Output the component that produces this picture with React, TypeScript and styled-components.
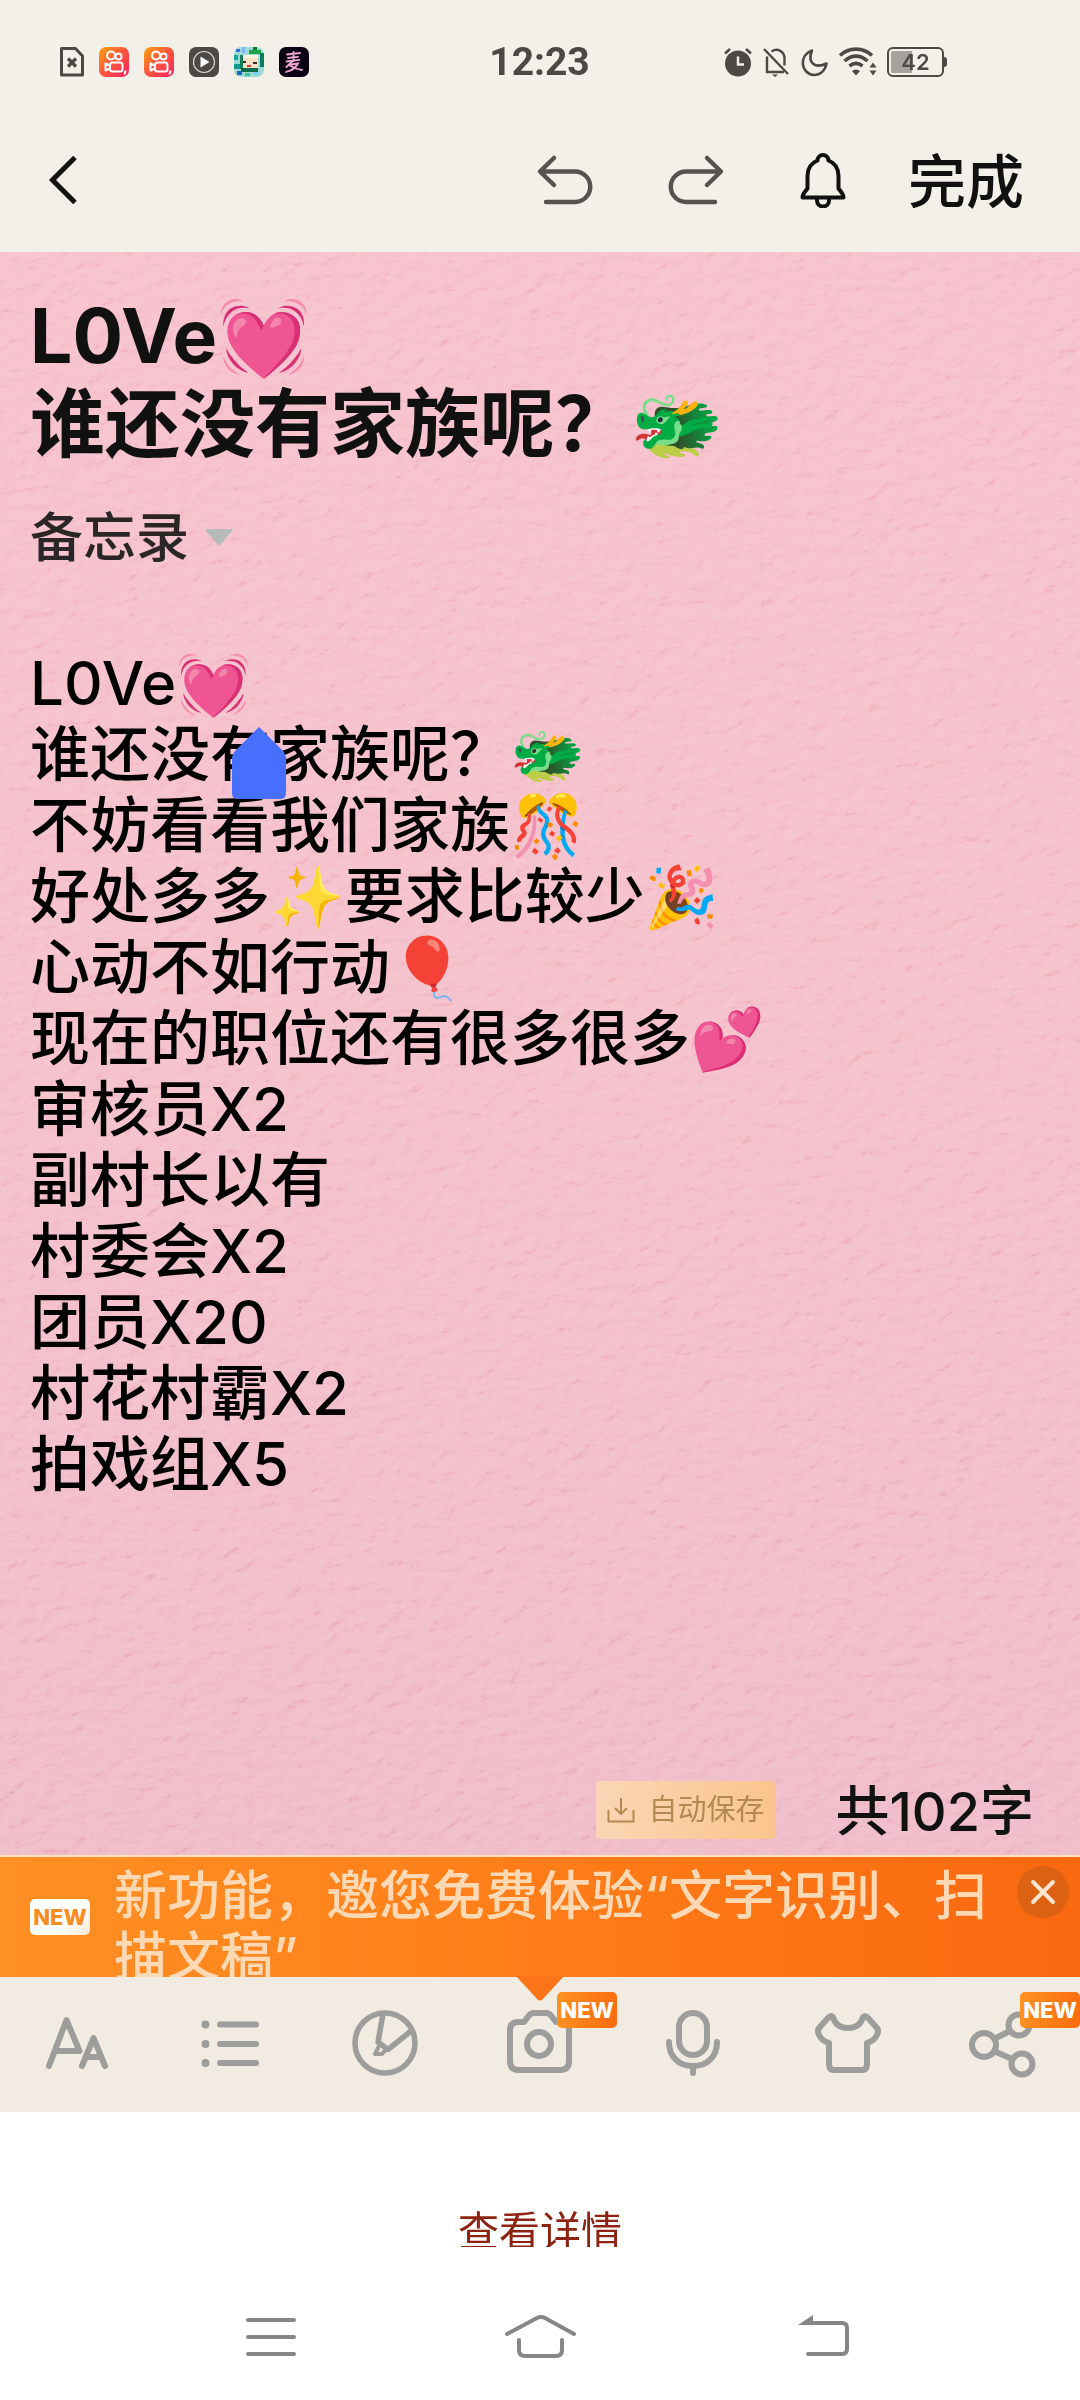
import React from 'react';
import styled, { createGlobalStyle } from 'styled-components';

const GlobalStyle = createGlobalStyle`
  *, *::before, *::after { box-sizing: border-box; }
  body {
    margin: 0;
    background: #ffffff;
    font-family: Inter, "Noto Sans CJK SC", "Noto Color Emoji", sans-serif;
  }
  button, textarea, select { font-family: inherit; color: inherit; }
  svg { display: block; }
`;

const Screen = styled.div`
  min-height: 100vh;
  display: flex;
  flex-direction: column;
`;

/* ---------- top of the screen ---------- */

const Header = styled.header`
  background: #f3f0e9;
`;

const StatusBar = styled.div`
  height: 124px;
  padding: 0 136px 0 57px;
  display: grid;
  grid-template-columns: 1fr auto 1fr;
  align-items: center;
  color: #4c4846;
`;

const StatusGroup = styled.div<{ $gap: number; $end?: boolean }>`
  display: flex;
  align-items: center;
  justify-content: ${(p) => (p.$end ? 'flex-end' : 'flex-start')};
  gap: ${(p) => p.$gap}px;
`;

const Clock = styled.time`
  font-family: Roboto, sans-serif;
  font-size: 39px;
  line-height: 48px;
  font-weight: 700;
  padding-left: 78px;
`;

const Battery = styled.span`
  position: relative;
  width: 57px;
  height: 30px;
  border: 2px solid #4c4846;
  border-radius: 6px;
  padding: 2px;
  background: linear-gradient(90deg, #a5a29e 42%, transparent 42%) content-box;
  font-size: 22px;
  line-height: 22px;
  font-weight: 600;
  text-align: center;
  &::after {
    content: '';
    position: absolute;
    right: -5px;
    top: 8px;
    width: 3px;
    height: 10px;
    border-radius: 0 3px 3px 0;
    background: #4c4846;
  }
`;

const ActionBar = styled.nav`
  height: 128px;
  padding: 0 56px 16px 42px;
  display: flex;
  align-items: center;
`;

const PlainButton = styled.button`
  padding: 0;
  border: 0;
  background: none;
  display: flex;
  align-items: center;
  justify-content: center;
  cursor: pointer;
`;

const ActionGroup = styled.div`
  margin-left: auto;
  display: flex;
  align-items: center;
  gap: 71px;
`;

const DoneButton = styled(PlainButton)`
  font-size: 58px;
  line-height: 64px;
  font-weight: 500;
  color: #111111;
  margin-left: -12px;
  padding-top: 4px;
`;

/* ---------- note ---------- */

const Paper = styled.main`
  position: relative;
  flex: 1;
  display: flex;
  flex-direction: column;
  padding: 40px 30px 16px;
  background: linear-gradient(180deg, #f6c0cc 0%, #f4bfca 50%, #efbac8 100%);
`;

const Grain = styled.svg`
  position: absolute;
  inset: 0;
  width: 100%;
  height: 100%;
  opacity: 0.3;
  mix-blend-mode: soft-light;
  pointer-events: none;
`;

const NoteField = styled.textarea`
  position: relative;
  display: block;
  width: 100%;
  padding: 0;
  border: 0;
  outline: 0;
  resize: none;
  overflow: hidden;
  background: none;
`;

const TitleField = styled(NoteField)`
  height: 176px;
  font-size: 75px;
  line-height: 88px;
  font-weight: 700;
  color: #111111;
`;

const BodyField = styled(NoteField)`
  height: 852px;
  font-size: 60px;
  line-height: 71px;
  font-weight: 500;
  color: #000000;
`;

const FolderPicker = styled.label`
  position: relative;
  align-self: flex-start;
  margin: 40px 0 80px;
  display: flex;
  align-items: center;
  gap: 16px;
`;

const FolderSelect = styled.select`
  appearance: none;
  height: 60px;
  padding: 0;
  border: 0;
  background: none;
  font-size: 53px;
  line-height: 60px;
  font-weight: 500;
  color: #2a2526;
`;

const BodyWrap = styled.div`
  position: relative;
`;

const CursorHandle = styled.svg`
  position: absolute;
  left: 202px;
  top: 79px;
`;

const NoteFooter = styled.div`
  position: relative;
  margin-top: auto;
  padding-right: 16px;
  display: flex;
  justify-content: flex-end;
  align-items: center;
  gap: 60px;
`;

const AutoSave = styled.button`
  height: 58px;
  padding: 0 11px;
  border: 0;
  border-radius: 4px;
  display: flex;
  align-items: center;
  gap: 13px;
  background: linear-gradient(90deg, #fad6b6, #fbc48c);
  && { color: #b18a52; }
  font-size: 29px;
  line-height: 32px;
`;

const WordCount = styled.span`
  padding-top: 4px;
  font-size: 54px;
  line-height: 54px;
  font-weight: 500;
  color: #111111;
`;

/* ---------- promo banner ---------- */

const Banner = styled.aside`
  position: relative;
  z-index: 1;
  height: 122px;
  border-top: 2px solid #fde3c4;
  padding-left: 30px;
  display: flex;
  align-items: flex-start;
  background: linear-gradient(90deg, #ff9024, #ff7d18 50%, #f96810);
`;

const BannerText = styled.p`
  margin: 0;
  padding: 9px 0 0 24px;
  flex: 1;
  height: 120px;
  overflow: hidden;
  font-size: 53px;
  line-height: 61px;
  font-weight: 500;
  color: #ffd8b4;
`;

const NewTag = styled.span<{ $light?: boolean }>`
  flex: none;
  width: 60px;
  height: 36px;
  border-radius: 5px;
  display: flex;
  align-items: center;
  justify-content: center;
  font-size: 22px;
  line-height: 36px;
  font-weight: 800;
  color: ${(p) => (p.$light ? '#f98d22' : '#ffffff')};
  background: ${(p) =>
    p.$light ? 'linear-gradient(135deg, #ffffff 60%, #ffe9d2)' : 'linear-gradient(100deg, #ff9322, #fa6a10)'};
`;

const BannerTag = styled(NewTag)`
  margin-top: 42px;
`;

const CloseButton = styled(PlainButton)`
  flex: none;
  width: 52px;
  height: 52px;
  margin: 9px 11px 0 18px;
  border-radius: 50%;
  background: #dd6113;
`;

const Pointer = styled.svg`
  position: absolute;
  top: 119px;
  left: 50%;
  margin-left: -24px;
`;

/* ---------- tool row ---------- */

const ToolRow = styled.div`
  height: 135px;
  display: grid;
  grid-template-columns: repeat(7, 1fr);
  background: #f1ebe1;
  color: #9d9d9c;
`;

const ToolButton = styled(PlainButton)`
  position: relative;
  height: 132px;
`;

const CornerTag = styled(NewTag)`
  position: absolute;
  right: 0;
  top: 15px;
`;

/* ---------- bottom ---------- */

const Footer = styled.footer`
  height: 288px;
  background: #ffffff;
  display: flex;
  flex-direction: column;
  align-items: center;
  color: #868686;
`;

const DetailsLink = styled.a`
  margin-top: 96px;
  height: 39px;
  overflow: hidden;
  font-size: 41px;
  line-height: 46px;
  color: #8d2413;
  text-decoration: none;
`;

const SystemNav = styled.nav`
  width: 75%;
  margin-top: 65px;
  display: grid;
  grid-template-columns: repeat(3, 1fr);
`;

const Kuaishou = ({ id }: { id: string }) => (
  <svg width="30" height="30" viewBox="0 0 30 30" fill="none">
    <defs>
      <linearGradient id={id} x1="0" y1="0" x2="1" y2="1">
        <stop offset="0" stopColor="#ffa30a" />
        <stop offset="0.45" stopColor="#ff5a3c" />
        <stop offset="1" stopColor="#f5205f" />
      </linearGradient>
    </defs>
    <rect width="30" height="30" rx="7" fill={`url(#${id})`} />
    <g stroke="#fff" strokeWidth="2">
      <circle cx="12" cy="8.500" r="4" />
      <circle cx="19.500" cy="9.500" r="3" />
      <rect x="11" y="15.500" width="12.500" height="9" rx="2.500" />
      <path d="M11 18.500L6.500 16.500V23.500L11 21.500" strokeLinejoin="round" />
    </g>
    <path d="M25.500 23.500h2l-1 4h-2z" fill="#fff" />
  </svg>
);

const noteBody = [
  'L0Ve💓',
  '谁还没有家族呢？🐲',
  '不妨看看我们家族🎊',
  '好处多多✨要求比较少🎉',
  '心动不如行动🎈',
  '现在的职位还有很多很多💕',
  '审核员X2',
  '副村长以有',
  '村委会X2',
  '团员X20',
  '村花村霸X2',
  '拍戏组X5',
].join('\n');

const pixels: [number, number, number, number, string][] = [
  [2, 2, 4, 3, '#2e6fd8'], [8, 0, 3, 6, '#7fb4ee'], [0, 8, 4, 5, '#17a8a0'], [0, 17, 6, 5, '#0c9a8e'],
  [3, 24, 5, 4, '#1f64c4'], [11, 26, 5, 3, '#35c79a'], [20, 25, 5, 3, '#7fd0f0'], [19, 0, 4, 3, '#0d7a2e'],
  [15, 3, 12, 4, '#1fa04a'], [26, 6, 4, 14, '#0b7d5c'], [6, 8, 3, 14, '#12805a'], [7, 21, 17, 4, '#0a6b4c'],
  [9, 8, 15, 13, '#fbe0c8'], [9, 8, 15, 3, '#fff4e2'], [9, 14, 3, 2, '#3a2c22'], [19, 15, 4, 2, '#3a2c22'],
  [13, 18, 4, 2, '#d6402e'],
];

export default function App() {
  return (
    <Screen>
      <GlobalStyle />
      <Header>
        <StatusBar>
          <StatusGroup $gap={15}>
            <svg width="27" height="30" viewBox="0 0 27 30" fill="none" stroke="#4c4846">
              <path d="M5 1.500h13.500l7 7.500v19H4.500V1.500z" strokeWidth="3" strokeLinejoin="round" />
              <path d="M11 11.500l8 8M19 11.500l-8 8" strokeWidth="3.200" />
            </svg>
            <Kuaishou id="ks-a" />
            <Kuaishou id="ks-b" />
            <svg width="30" height="30" viewBox="0 0 30 30">
              <rect width="30" height="30" rx="7" fill="#4c4846" />
              <circle cx="15" cy="15" r="10.500" fill="none" stroke="#d8d6d2" strokeWidth="1.200" />
              <path d="M11.500 9.500v11l9-5.500z" fill="#fff" />
            </svg>
            <svg width="30" height="30" viewBox="0 0 30 30">
              <clipPath id="cube"><rect width="30" height="30" rx="7" /></clipPath>
              <g clipPath="url(#cube)">
                <rect width="30" height="30" fill="#9fd9d6" />
                {pixels.map(([x, y, w, h, c], i) => (
                  <rect key={i} x={x} y={y} width={w} height={h} fill={c} />
                ))}
              </g>
            </svg>
            <svg width="30" height="30" viewBox="0 0 30 30" fill="none">
              <rect width="30" height="30" rx="7" fill="#0b0313" />
              <g stroke="#efa6cf" strokeWidth="1.800" strokeLinecap="round">
                <path d="M8 7.500l13-1.500M9 11l10-1.200M7.500 14.500l13-1.700M14.500 5v9" />
                <path d="M13.500 14l-6 6M12 17.500l7-1c-2 4-6 7-12 8.500M11 18.500c3 2 6 4 12 4.500" />
              </g>
            </svg>
          </StatusGroup>
          <Clock>12:23</Clock>
          <StatusGroup $gap={9} $end>
            <svg width="30" height="30" viewBox="0 0 30 30">
              <circle cx="15" cy="16.500" r="13" fill="#4c4846" />
              <path d="M2 6.500l5-4.500M28 6.500L23 2" stroke="#4c4846" strokeWidth="2.600" fill="none" />
              <path d="M15 9.500v8h6" stroke="#f3f0e9" strokeWidth="2.400" fill="none" />
            </svg>
            <svg width="28" height="30" viewBox="0 0 28 30" fill="none" stroke="#4c4846" strokeWidth="2.400">
              <path d="M2 2l24 25M5 9.500v15.500h17M9.500 4.500c6-4 13 0 13 7v7" />
              <path d="M10 27.500h6l-3 2.500z" fill="#4c4846" stroke="none" />
            </svg>
            <svg width="30" height="30" viewBox="0 0 30 30" fill="none" stroke="#4c4846" strokeWidth="2.600">
              <path d="M13 3.500C8 16 16 22 27.500 16.500C26 24 21 28 15 28C2 27 -1 9 13 3.500z" strokeLinejoin="round" />
            </svg>
            <svg width="40" height="30" viewBox="0 0 40 30" fill="none" stroke="#4c4846" strokeWidth="3.600">
              <path d="M2 8.500C11 0 25 0 34 8.500M6.500 14C14 7.500 22 7.500 29.500 14M11.500 19C16 15.500 20 15.500 24.500 19" />
              <path d="M14 24q4-3 8 0l-4 4.500z" fill="#4c4846" stroke="none" />
              <path d="M31.500 20.500l3.500-5 3.500 5zM31.500 23.500l3.500 5 3.500-5z" fill="#4c4846" stroke="none" />
            </svg>
            <Battery>42</Battery>
          </StatusGroup>
        </StatusBar>
        <ActionBar>
          <PlainButton aria-label="返回">
            <svg width="44" height="52" viewBox="0 0 44 52" fill="none" stroke="#111" strokeWidth="5">
              <path d="M33 3.500L10.500 26L33 48.500" />
            </svg>
          </PlainButton>
          <ActionGroup>
            <PlainButton aria-label="撤销">
              <svg width="60" height="52" viewBox="0 0 60 52" fill="none" stroke="#555250" strokeWidth="4.500" strokeLinecap="round" strokeLinejoin="round">
                <path d="M19 4L5 17.500L19 31M6 17.500H40a15 15 0 0 1 0 30.500H11" />
              </svg>
            </PlainButton>
            <PlainButton aria-label="重做">
              <svg width="60" height="52" viewBox="0 0 60 52" fill="none" stroke="#555250" strokeWidth="4.500" strokeLinecap="round" strokeLinejoin="round">
                <path d="M41 4L55 17.500L41 31M54 17.500H20a15 15 0 0 0 0 30.500H49" />
              </svg>
            </PlainButton>
            <PlainButton aria-label="提醒">
              <svg width="52" height="56" viewBox="0 0 52 56" fill="none" stroke="#111" strokeWidth="4" strokeLinejoin="round">
                <path d="M20.500 8.500a5.500 5.500 0 0 1 11 0C38 11 41.500 16.500 41.500 24V36.500C44 40 46.500 42 46.500 45.500H5.500C5.500 42 8 40 10.500 36.500V24C10.500 16.500 14 11 20.500 8.500z" />
                <path d="M20 46v2.500a6 6 0 0 0 12 0V46" />
              </svg>
            </PlainButton>
            <DoneButton>完成</DoneButton>
          </ActionGroup>
        </ActionBar>
      </Header>

      <Paper>
        <Grain aria-hidden="true">
          <filter id="grain" x="0" y="0" width="100%" height="100%">
            <feTurbulence type="fractalNoise" baseFrequency="0.06 0.08" numOctaves="4" seed="8" />
            <feColorMatrix values="0 0 0 0 0  0 0 0 0 0  0 0 0 0 0  1 0 0 0 0" />
            <feDiffuseLighting lightingColor="#ffffff" surfaceScale="5" diffuseConstant="0.75">
              <feDistantLight azimuth="235" elevation="42" />
            </feDiffuseLighting>
          </filter>
          <rect width="100%" height="100%" filter="url(#grain)" />
        </Grain>
        <TitleField aria-label="标题" spellCheck={false} defaultValue={'L0Ve💓\n谁还没有家族呢？🐲'} />
        <FolderPicker>
          <FolderSelect aria-label="文件夹" defaultValue="备忘录">
            <option>备忘录</option>
          </FolderSelect>
          <svg width="28" height="18" viewBox="0 0 28 18">
            <path d="M1 0h26q1 1 0 2L15.500 15.500q-1.500 1.500-3 0L1 2q-1-1 0-2z" fill="#b6babb" />
          </svg>
        </FolderPicker>
        <BodyWrap>
          <BodyField aria-label="正文" spellCheck={false} defaultValue={noteBody} />
          <CursorHandle width="54" height="72" viewBox="0 0 54 72" aria-hidden="true">
            <path d="M27 0L50 23q4 4 4 9V66q0 6-6 6H6q-6 0-6-6V32q0-5 4-9z" fill="#466ffd" />
          </CursorHandle>
        </BodyWrap>
        <NoteFooter>
          <AutoSave>
            <svg width="28" height="28" viewBox="0 0 28 28" fill="none" stroke="#b18a52" strokeWidth="2">
              <path d="M1.500 14v11.500h25V14M14 2v15.500M8 12l6 6 6-6" />
            </svg>
            自动保存
          </AutoSave>
          <WordCount>共102字</WordCount>
        </NoteFooter>
      </Paper>

      <Banner>
        <BannerTag $light>NEW</BannerTag>
        <BannerText>新功能，邀您免费体验“文字识别、扫描文稿”</BannerText>
        <CloseButton aria-label="关闭">
          <svg width="28" height="28" viewBox="0 0 28 28" fill="none" stroke="#ffe3cc" strokeWidth="4" strokeLinecap="round">
            <path d="M4 4l20 20M24 4L4 24" />
          </svg>
        </CloseButton>
        <Pointer width="48" height="26" viewBox="0 0 48 26" aria-hidden="true">
          <path d="M0 0h48L26.500 23.500q-2.500 2-5 0z" fill="#fb7417" />
        </Pointer>
      </Banner>

      <ToolRow>
        <ToolButton aria-label="字体">
          <svg width="72" height="72" viewBox="0 0 72 72" fill="none" stroke="currentColor" strokeWidth="6" strokeLinecap="round" strokeLinejoin="round">
            <path d="M8 59L25.500 13L38.500 44H15M41 59L52.500 31L64 59M45 50H60" />
          </svg>
        </ToolButton>
        <ToolButton aria-label="列表">
          <svg width="72" height="72" viewBox="0 0 72 72" fill="none" stroke="currentColor" strokeWidth="6" strokeLinecap="round">
            <path d="M25 17.500H61M25 37H61M25 56H61" />
            <path d="M10.500 17.500h.01M10.500 37h.01M10.500 56h.01" strokeWidth="8" />
          </svg>
        </ToolButton>
        <ToolButton aria-label="手写">
          <svg width="72" height="72" viewBox="0 0 72 72" fill="none" stroke="currentColor" strokeWidth="5.500" strokeLinejoin="round">
            <circle cx="35" cy="36" r="30" />
            <path d="M33 7L28 35L38 42.500L61 24" />
            <path d="M30 37L25 47h7l5-6" strokeWidth="4" />
          </svg>
        </ToolButton>
        <ToolButton aria-label="拍照">
          <svg width="72" height="72" viewBox="0 0 72 72" fill="none" stroke="currentColor" strokeWidth="6" strokeLinejoin="round">
            <path d="M20 15L25 8.500Q27 6 30 6H42Q45 6 47 8.500L52 15H56Q65 15 65 23V54Q65 63 56 63H15Q6 63 6 54V23Q6 15 15 15z" />
            <circle cx="35" cy="37" r="12" />
          </svg>
          <CornerTag>NEW</CornerTag>
        </ToolButton>
        <ToolButton aria-label="录音">
          <svg width="72" height="72" viewBox="0 0 72 72" fill="none" stroke="currentColor" strokeWidth="6" strokeLinecap="round">
            <rect x="21" y="6" width="28" height="42" rx="14" />
            <path d="M11 35C11 50 21 59 35 59S59 50 59 35M35 59V66" />
          </svg>
        </ToolButton>
        <ToolButton aria-label="皮肤">
          <svg width="72" height="72" viewBox="1 0 72 72" fill="none" stroke="currentColor" strokeWidth="6" strokeLinecap="round" strokeLinejoin="round">
            <path d="M21 10Q24 21 36 21T51 10Q53 8 56 11L65 21Q67 24 65 28Q62 34 55 36V57Q55 63 50 63H22Q17 63 17 57V36Q10 34 7 28Q5 24 7 21L16 11Q19 8 21 10z" />
          </svg>
        </ToolButton>
        <ToolButton aria-label="分享">
          <svg width="72" height="72" viewBox="1 0 72 72" fill="none" stroke="currentColor" strokeWidth="6">
            <circle cx="18" cy="38" r="12" />
            <circle cx="53" cy="18" r="10.500" />
            <circle cx="56" cy="57" r="10.500" />
            <path d="M28 32L44 24M28 44L47 52.500" />
          </svg>
          <CornerTag>NEW</CornerTag>
        </ToolButton>
      </ToolRow>

      <Footer>
        <DetailsLink href="#details">查看详情</DetailsLink>
        <SystemNav>
          <PlainButton aria-label="菜单">
            <svg width="80" height="50" viewBox="0 0 80 50" fill="none" stroke="#868686" strokeWidth="4" strokeLinecap="round">
              <path d="M18 8H64M18 25H64M18 42H64" />
            </svg>
          </PlainButton>
          <PlainButton aria-label="主页">
            <svg width="80" height="50" viewBox="0 0 80 50" fill="none" stroke="#868686" strokeWidth="4" strokeLinecap="round">
              <path d="M7 22L37 6Q41 4 45 6L74 22M19 28V38Q19 44 25 44H56Q62 44 62 38V28" />
            </svg>
          </PlainButton>
          <PlainButton aria-label="后退">
            <svg width="80" height="50" viewBox="0 0 80 50" fill="none" stroke="#868686" strokeWidth="4" strokeLinecap="round">
              <path d="M38 11H72Q77 11 77 16V37Q77 42 72 42H38" />
              <path d="M28 13L43 3V13z" fill="#868686" stroke="none" />
            </svg>
          </PlainButton>
        </SystemNav>
      </Footer>
    </Screen>
  );
}
